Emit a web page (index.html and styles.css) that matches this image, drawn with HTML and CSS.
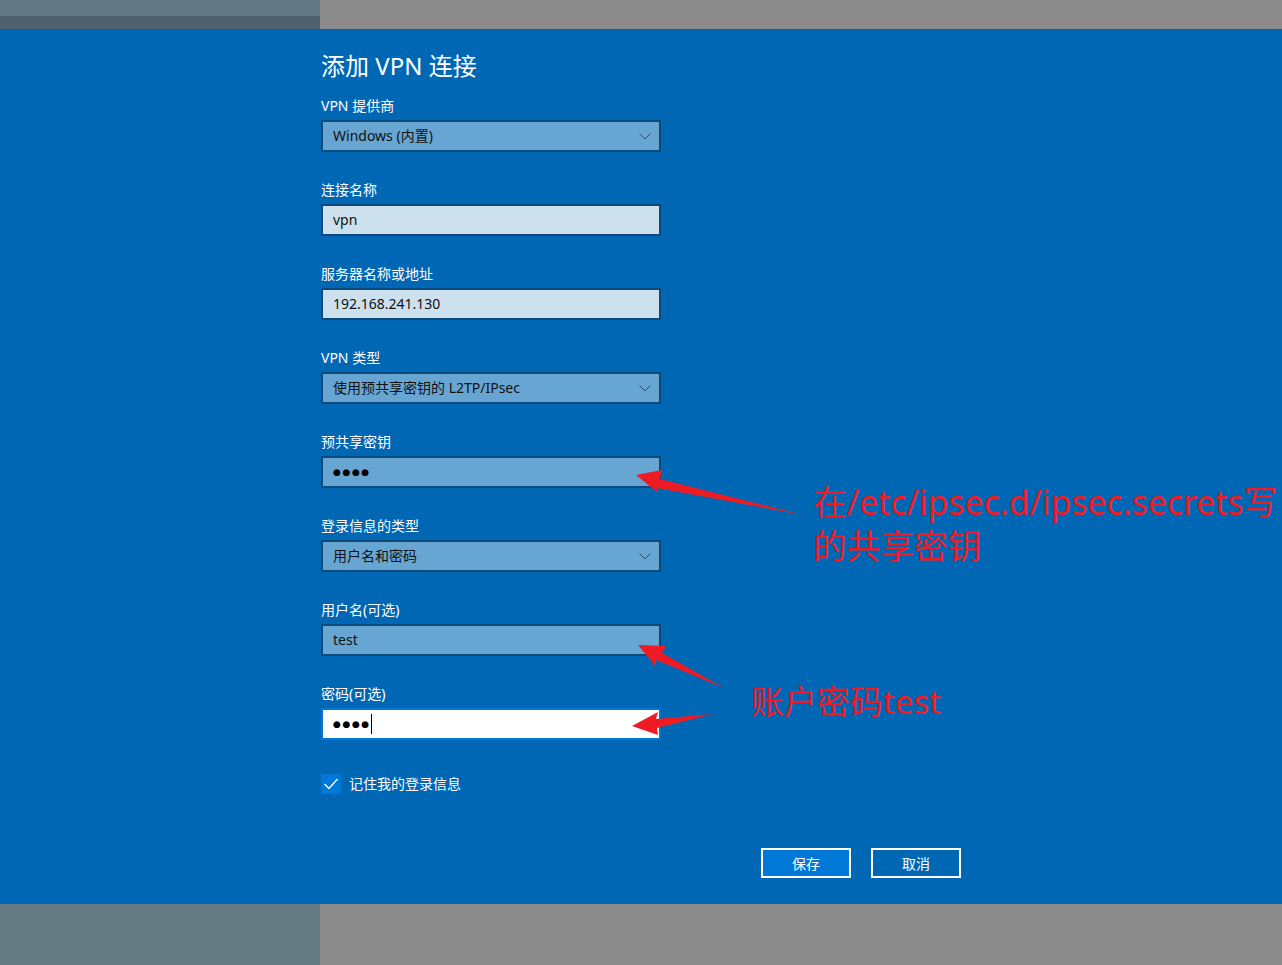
FILE: index.html
```html
<!DOCTYPE html>
<html lang="zh-CN">
<head>
<meta charset="utf-8">
<title>添加 VPN 连接</title>
<link rel="stylesheet" href="styles.css">
</head>
<body>
<div class="band band-top">
  <div class="band-left"><div class="band-strip"></div></div>
  <div class="band-right"></div>
</div>
<main class="panel">
  <div class="form">
    <h1 class="title">添加 VPN 连接</h1>

    <div class="field">
      <div class="label">VPN 提供商</div>
      <div class="box box-select">
        <span>Windows (内置)</span>
        <svg class="chev" width="12" height="7" viewBox="0 0 12 7"><polyline points="0.5,0.5 6,6 11.5,0.5" fill="none" stroke="#2c4e6e" stroke-width="1"/></svg>
      </div>
    </div>

    <div class="field">
      <div class="label">连接名称</div>
      <div class="box box-light"><span>vpn</span></div>
    </div>

    <div class="field">
      <div class="label">服务器名称或地址</div>
      <div class="box box-light"><span>192.168.241.130</span></div>
    </div>

    <div class="field">
      <div class="label">VPN 类型</div>
      <div class="box box-select">
        <span>使用预共享密钥的 L2TP/IPsec</span>
        <svg class="chev" width="12" height="7" viewBox="0 0 12 7"><polyline points="0.5,0.5 6,6 11.5,0.5" fill="none" stroke="#2c4e6e" stroke-width="1"/></svg>
      </div>
    </div>

    <div class="field">
      <div class="label">预共享密钥</div>
      <div class="box box-select"><span class="dots">●●●●</span></div>
    </div>

    <div class="field">
      <div class="label">登录信息的类型</div>
      <div class="box box-select">
        <span>用户名和密码</span>
        <svg class="chev" width="12" height="7" viewBox="0 0 12 7"><polyline points="0.5,0.5 6,6 11.5,0.5" fill="none" stroke="#2c4e6e" stroke-width="1"/></svg>
      </div>
    </div>

    <div class="field">
      <div class="label">用户名(可选)</div>
      <div class="box box-select"><span>test</span></div>
    </div>

    <div class="field">
      <div class="label">密码(可选)</div>
      <div class="box box-focus"><span class="dots">●●●●</span><span class="caret"></span></div>
    </div>

    <div class="remember">
      <span class="check">
        <svg width="20" height="20" viewBox="0 0 20 20"><polyline points="3.5,10 8,14.5 16.5,5" fill="none" stroke="#ffffff" stroke-width="1.4"/></svg>
      </span>
      <span>记住我的登录信息</span>
    </div>

    <div class="buttons">
      <button class="btn btn-primary" type="button">保存</button>
      <button class="btn" type="button">取消</button>
    </div>
  </div>
</main>
<div class="band band-bottom">
  <div class="band-left"></div>
  <div class="band-right"></div>
</div>

<svg class="arrows" width="1282" height="965" viewBox="0 0 1282 965">
  <polygon points="636,475 662,470 660,479 803,515 657,488 658,493" fill="#ed1c24"/>
  <polygon points="638,645 666,646 662,653 724,688 656,660 656,667" fill="#ed1c24"/>
  <polygon points="632,726 658,712 656,719 713,714 657,728 658,735" fill="#ed1c24"/>
</svg>
<div class="note note-key">在/etc/ipsec.d/ipsec.secrets写<br>的共享密钥</div>
<div class="note note-pass">账户密码test</div>
</body>
</html>
```

FILE: styles.css
```css
html, body {
  margin: 0;
  padding: 0;
}
body {
  width: 1282px;
  height: 965px;
  position: relative;
  overflow: hidden;
  font-family: "Noto Sans", "Noto Sans CJK SC", sans-serif;
  background: #0067b4;
}
.band {
  display: flex;
}
.band-top {
  height: 29px;
}
.band-bottom {
  height: 61px;
}
.band-left {
  width: 320px;
  background: #637884;
  display: flex;
  flex-direction: column;
  justify-content: flex-end;
}
.band-bottom .band-left {
  background: #637a83;
}
.band-strip {
  height: 13px;
  background: #4f616c;
}
.band-right {
  flex: 1;
  background: #8c8c8c;
}
.panel {
  height: 875px;
  box-sizing: border-box;
  background: #0067b4;
  padding: 21px 0 0 321px;
}
.form {
  width: 640px;
  display: flex;
  flex-direction: column;
}
.title {
  margin: 0 0 14px 0;
  font-size: 24px;
  line-height: 32px;
  font-weight: normal;
  color: #ffffff;
}
.field {
  display: flex;
  flex-direction: column;
  margin-bottom: 28px;
}
.label {
  font-size: 14px;
  line-height: 20px;
  color: #ffffff;
  margin-bottom: 4px;
}
.box {
  width: 340px;
  height: 32px;
  box-sizing: border-box;
  border: 2px solid #0d4a79;
  padding: 0 8px 0 10px;
  display: flex;
  align-items: center;
  font-size: 14px;
  color: #111111;
}
.box span {
  line-height: 20px;
}
.box-select {
  background: #67a6d3;
  justify-content: space-between;
}
.box-light {
  background: #cce0ee;
}
.box-focus {
  background: #ffffff;
  border-color: #0078d7;
}
.chev {
  display: block;
  margin-right: 0;
}
.dots {
  font-family: "DejaVu Sans", sans-serif;
  font-size: 9px;
  letter-spacing: 1.6px;
  color: #000000;
}
.caret {
  width: 1px;
  height: 20px;
  background: #000000;
  margin-left: 0;
}
.remember {
  margin-top: 6px;
  display: flex;
  align-items: center;
  gap: 8px;
  font-size: 14px;
  line-height: 20px;
  color: #ffffff;
}
.check {
  width: 20px;
  height: 20px;
  background: #0078d7;
  display: block;
}
.check svg {
  display: block;
}
.buttons {
  margin-top: 54px;
  display: flex;
  justify-content: flex-end;
  gap: 20px;
}
.btn {
  width: 90px;
  height: 30px;
  box-sizing: border-box;
  border: 2px solid #ffffff;
  background: transparent;
  color: #ffffff;
  font-family: "Noto Sans", "Noto Sans CJK SC", sans-serif;
  font-size: 14px;
  padding: 0;
  margin: 0;
}
.btn-primary {
  background: #0078d7;
}
.arrows {
  position: absolute;
  left: 0;
  top: 0;
  pointer-events: none;
}
.note {
  position: absolute;
  color: #ed1c24;
  font-family: "Noto Sans", "Noto Sans CJK SC", sans-serif;
  white-space: nowrap;
}
.note-key {
  left: 813px;
  top: 480px;
  font-size: 33.7px;
  line-height: 44px;
}
.note-pass {
  left: 751px;
  top: 680px;
  font-size: 33px;
  line-height: 44px;
}
```
